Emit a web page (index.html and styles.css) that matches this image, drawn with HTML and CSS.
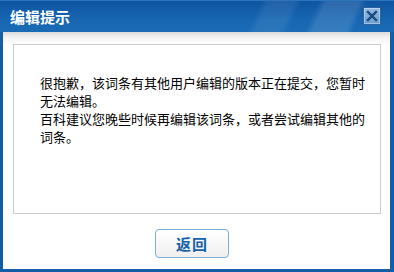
FILE: index.html
```html
<!DOCTYPE html>
<html lang="zh-CN">
<head>
<meta charset="utf-8">
<link rel="stylesheet" href="styles.css">
</head>
<body>
<div class="dialog">
  <div class="titlebar">
    <span class="title">编辑提示</span>
    <span class="close" aria-label="关闭">
      <svg width="12" height="12" viewBox="0 0 12 12"><path d="M2 2 L10 10 M10 2 L2 10" stroke="#1b4a82" stroke-width="2.4" stroke-linecap="square"/></svg>
    </span>
  </div>
  <div class="body">
    <div class="msgbox">
      <p class="msg">很抱歉，该词条有其他用户编辑的版本正在提交，您暂时无法编辑。</p>
      <p class="msg">百科建议您晚些时候再编辑该词条，或者尝试编辑其他的词条。</p>
    </div>
    <div class="actions">
      <button class="btn">返回</button>
    </div>
  </div>
</div>
</body>
</html>
```
FILE: styles.css
```css
html, body {
  margin: 0;
  padding: 0;
}
body {
  width: 394px;
  height: 272px;
  overflow: hidden;
  font-family: "Noto Sans CJK SC", "Noto Sans", sans-serif;
}
.dialog {
  width: 394px;
  height: 272px;
  box-sizing: border-box;
  background: #135ea6;
  display: flex;
  flex-direction: column;
}
.titlebar {
  height: 32px;
  flex: none;
  display: flex;
  align-items: center;
  justify-content: space-between;
  padding: 0 13px 0 10px;
  background:
    linear-gradient(115deg, rgba(255,255,255,0) 0%, rgba(255,255,255,0) 64%, rgba(255,255,255,0.08) 66%, rgba(255,255,255,0.08) 72%, rgba(255,255,255,0) 74%, rgba(255,255,255,0) 78%, rgba(255,255,255,0.12) 80%, rgba(255,255,255,0.12) 88%, rgba(255,255,255,0) 90%),
    linear-gradient(#0f54a0, #1666b2 60%, #1a6bb6);
  border-top: 1px solid #2c74bb;
  box-sizing: border-box;
}
.title {
  color: #fff;
  font-size: 15px;
  font-weight: bold;
  line-height: 16px;
  letter-spacing: 0;
}
.close {
  width: 18px;
  height: 18px;
  box-sizing: border-box;
  border: 1px solid #2e5f96;
  background: linear-gradient(#94bce2, #6a9dd0);
  box-shadow: inset 0 0 0 1px rgba(255,255,255,0.35);
  display: flex;
  align-items: center;
  justify-content: center;
  margin-top: -2px;
}
.body {
  flex: 1;
  margin: 0 4px 3px 3px;
  background: linear-gradient(#dcdcdc, #f4f4f4 6px, #ffffff 13px, #ffffff);
  display: flex;
  flex-direction: column;
  padding: 12px 9px 0 10px;
}
.msgbox {
  height: 170px;
  box-sizing: border-box;
  border: 1px solid #cccccc;
  background: #fff;
  padding: 29px 10px 0 26px;
}
.msg {
  margin: 0;
  font-size: 13px;
  line-height: 18px;
  color: #000;
}
.actions {
  display: flex;
  padding: 15px 0 0 142px;
}
.btn {
  width: 74px;
  height: 29px;
  box-sizing: border-box;
  border: 1px solid #7bafd6;
  border-radius: 4px;
  background: linear-gradient(#ffffff, #efefef);
  color: #1560a8;
  font-family: "Noto Sans CJK SC", "Noto Sans", sans-serif;
  font-size: 15px;
  font-weight: bold;
  padding: 0;
  line-height: 27px;
  letter-spacing: 1px;
}
```
